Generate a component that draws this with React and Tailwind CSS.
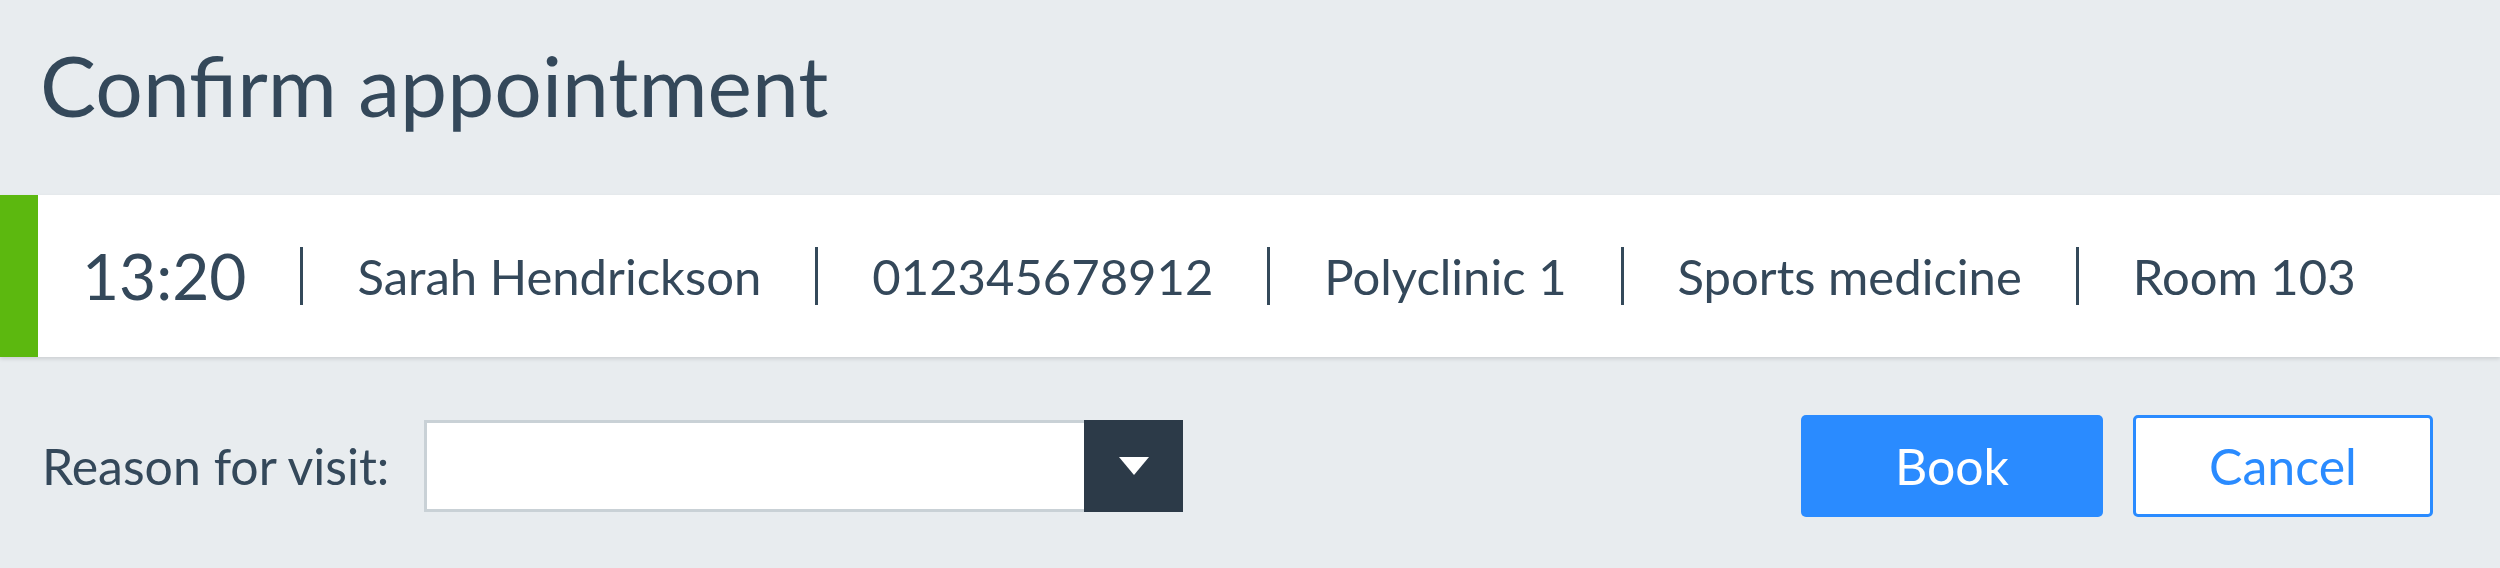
const details = ["Sarah Hendrickson", "012345678912", "Polyclinic 1", "Sports medicine", "Room 103"];

const Separator = () => <div className="mx-[54px] h-[58px] w-[3px] bg-[#34495a]" />;

export default function App() {
  return (
    <div
      className="h-[568px] w-[2500px] overflow-hidden bg-[#e8ecef] text-[#34485a]"
      style={{ fontFamily: "Lato, 'Open Sans', sans-serif" }}
    >
      {/* header */}
      <div className="h-[195px] pl-[40px] pt-[43px]">
        <h1 className="text-[84px] font-normal leading-none">Confirm appointment</h1>
      </div>

      {/* appointment card */}
      <div className="flex h-[162px] items-center border-l-[38px] border-[#5cb80f] bg-white pl-[44px] shadow-[0_2px_4px_rgba(0,0,0,0.12)]">
        <span className="text-[64px] leading-none">13:20</span>
        {details.map((d) => (
          <div key={d} className="flex items-center">
            <Separator />
            <span className="text-[49px] leading-none">{d}</span>
          </div>
        ))}
      </div>

      {/* bottom row */}
      <div className="mt-[58px] flex h-[102px] items-center pl-[42px] pr-[67px]">
        <span className="text-[50px] leading-none">Reason for visit:</span>
        <div className="ml-[35px] flex h-[92px] w-[759px]">
          <div className="flex-1 border-[3px] border-r-0 border-[#c9d1d6] bg-white" />
          <div className="flex w-[99px] items-center justify-center bg-[#2c3a48]">
            <svg width="30" height="18" viewBox="0 0 30 18">
              <polygon points="0,0 30,0 15,18" fill="#ffffff" />
            </svg>
          </div>
        </div>
        <div className="ml-auto flex gap-[30px]">
          <button className="h-[102px] w-[302px] rounded-[5px] bg-[#2a8bff] text-[50px] leading-none text-white">
            Book
          </button>
          <button className="h-[102px] w-[300px] rounded-[5px] border-[3px] border-[#2a8bff] bg-white text-[50px] leading-none text-[#2a8bff]">
            Cancel
          </button>
        </div>
      </div>
    </div>
  );
}
